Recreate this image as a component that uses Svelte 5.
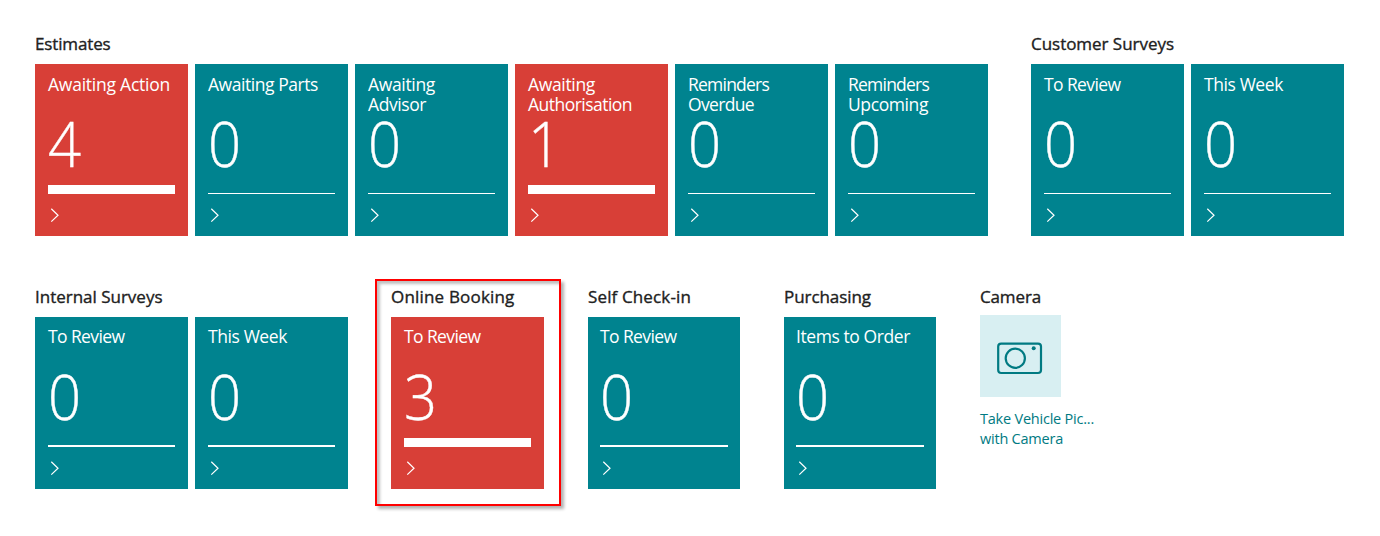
<script>
  const rows = [
    [
      {
        title: 'Estimates', fit: 75.5,
        tiles: [
          { lines: [['Awaiting Action', 122]], value: 4, alert: true },
          { lines: [['Awaiting Parts', 110]], value: 0 },
          { lines: [['Awaiting', 67], ['Advisor', 58]], value: 0 },
          { lines: [['Awaiting', 67], ['Authorisation', 104]], value: 1, alert: true },
          { lines: [['Reminders', 81], ['Overdue', 66]], value: 0 },
          { lines: [['Reminders', 81], ['Upcoming', 80]], value: 0 }
        ]
      },
      {
        title: 'Customer Surveys', fit: 143,
        tiles: [
          { lines: [['To Review', 76.5]], value: 0 },
          { lines: [['This Week', 79]], value: 0 }
        ]
      }
    ],
    [
      {
        title: 'Internal Surveys', fit: 127.5,
        tiles: [
          { lines: [['To Review', 76.5]], value: 0 },
          { lines: [['This Week', 79]], value: 0 }
        ]
      },
      { title: 'Online Booking', fit: 123.5, marked: true, tiles: [{ lines: [['To Review', 76.5]], value: 3, alert: true }] },
      { title: 'Self Check-in', fit: 103, narrow: true, tiles: [{ lines: [['To Review', 76.5]], value: 0 }] },
      { title: 'Purchasing', fit: 87, narrow: true, tiles: [{ lines: [['Items to Order', 114]], value: 0 }] },
      { title: 'Camera', fit: 61, camera: true, tiles: [] }
    ]
  ];

  // Tracks the letters so that a caption takes the given width.
  function fit(node, width) {
    const spare = width - node.getBoundingClientRect().width;
    node.style.letterSpacing = `${spare / node.textContent.length}px`;
  }
</script>

<main>
  {#each rows as groups, r}
    <div class="row" class:second={r === 1}>
      {#each groups as group}
        <section class:narrow={group.narrow}>
          {#if group.marked}<div class="marker"></div>{/if}
          <h2><span use:fit={group.fit}>{group.title}</span></h2>
          {#if group.camera}
            <div class="camera">
              <svg width="81" height="82" viewBox="0 0 81 82" fill="none" stroke="#007a82" stroke-width="2.2">
                <rect x="18.2" y="28.6" width="42.8" height="29.4" rx="3" />
                <circle cx="35.3" cy="43.3" r="9.6" />
                <circle cx="53.7" cy="33.3" r="2" fill="#007a82" stroke="none" />
              </svg>
            </div>
            <div class="link"><span use:fit={114}>Take Vehicle Pic...</span></div>
            <div class="link"><span use:fit={83}>with Camera</span></div>
          {:else}
            <div class="tiles">
              {#each group.tiles as tile}
                <div class="tile" class:alert={tile.alert}>
                  <div class="label">
                    {#each tile.lines as [text, width]}
                      <div><span use:fit={width}>{text}</span></div>
                    {/each}
                  </div>
                  <div class="value">{tile.value}</div>
                  <div class="bar"></div>
                  <svg class="chevron" width="10" height="15" viewBox="0 0 10 15" fill="none" stroke="#fff" stroke-width="1.2">
                    <path d="M1.3 0.8 L8 7.2 L1.3 13.6" />
                  </svg>
                </div>
              {/each}
            </div>
          {/if}
        </section>
      {/each}
    </div>
  {/each}
</main>

<style>
  :global(body) { background: #fff; }
  main {
    box-sizing: border-box;
    width: 1380px;
    height: 536px;
    padding: 32px 0 0 35px;
    overflow: hidden;
    font-family: "Open Sans", "Noto Sans", sans-serif;
  }
  span { display: inline-block; white-space: nowrap; }
  .row { display: flex; gap: 43px; height: 253px; }
  section { position: relative; }
  .narrow, .narrow + section { margin-left: 1px; }
  h2 {
    margin: 0;
    height: 32px;
    font-size: 17px;
    line-height: 24px;
    font-weight: 400;
    color: #212121;
    -webkit-text-stroke: .35px #212121;
  }
  .tiles { display: flex; gap: 7px; }
  .tile {
    box-sizing: border-box;
    display: flex;
    flex-direction: column;
    width: 153px;
    height: 172px;
    padding: 10px 13px 0;
    background: #00838f;
    color: #fff;
  }
  .narrow .tile { width: 152px; padding: 10px 12px 0; }
  .tile.alert { background: #d83f37; }
  .label { height: 38px; font-size: 17.5px; line-height: 20px; }
  .second .label { height: 39px; margin-top: -1px; }
  .value {
    height: 62px;
    font-size: 63px;
    line-height: 62px;
    font-weight: 300;
    -webkit-text-stroke: .4px #fff;
    transform: scaleX(.92);
    transform-origin: left;
  }
  .bar { height: 1px; margin-top: 19px; background: #fff; flex: none; }
  .second .bar { height: 2px; margin-top: 18px; }
  .tile.alert .bar { height: 9px; margin-top: 11px; }
  .chevron { display: block; margin: 14px 0 0 2px; }
  .marker {
    position: absolute;
    left: -16px;
    top: -6px;
    width: 182px;
    height: 223px;
    border: 2px solid #f00;
    box-shadow: 3px 3px 3px rgba(0,0,0,.3), inset 3px 3px 3px rgba(0,0,0,.25);
  }
  .camera { width: 81px; height: 82px; margin-top: -2px; background: #d8eff2; }
  .camera svg { display: block; }
  .link { height: 20px; font-size: 14.5px; line-height: 20px; color: #007a82; }
  .camera + .link { margin-top: 12px; }
</style>
